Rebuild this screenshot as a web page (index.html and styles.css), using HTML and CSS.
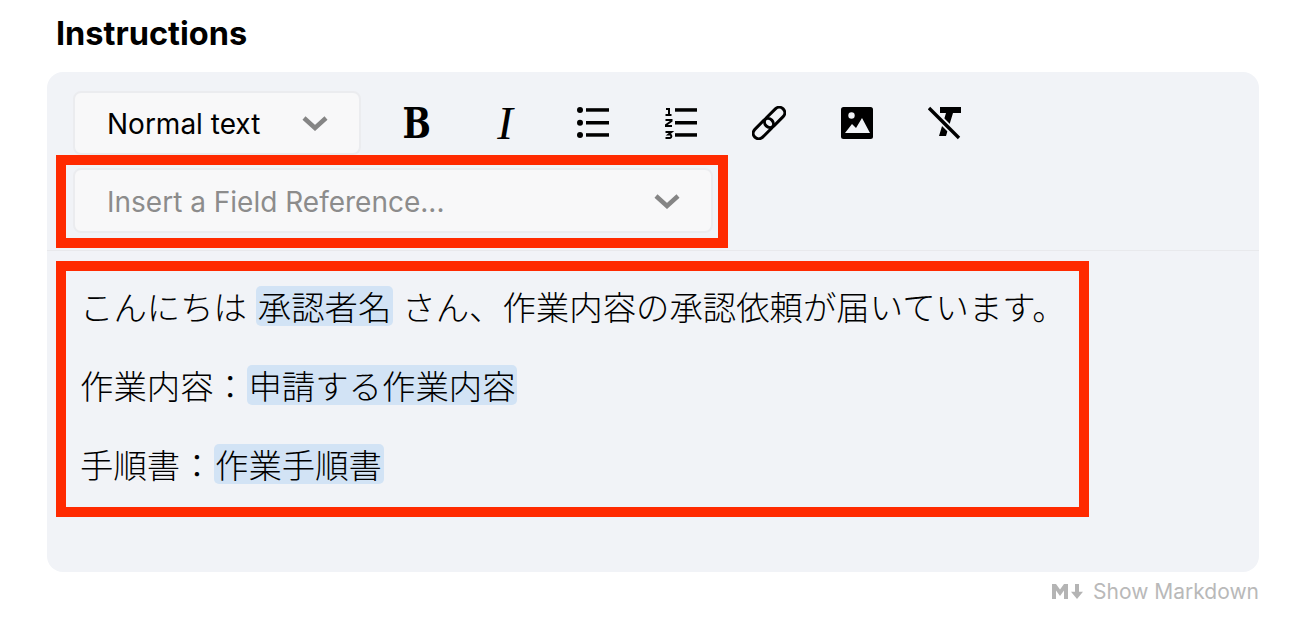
FILE: index.html
```html
<!DOCTYPE html>
<html lang="ja">
<head>
  <meta charset="UTF-8">
  <title>Instructions</title>
  <link rel="stylesheet" href="styles.css">
</head>
<body>
  <div class="field">
    <h2 class="field-title">Instructions</h2>

    <div class="editor">
      <div class="toolbar">
        <div class="toolbar-row">
          <div class="select select-format">
            <span>Normal text</span>
            <svg class="chevron" viewBox="0 0 26 16"><path d="M2 3l11 10L24 3"/></svg>
          </div>
          <button class="tool tool-bold" type="button"><span>B</span></button>
          <button class="tool tool-italic" type="button">I</button>
          <button class="tool" type="button">
            <svg viewBox="0 0 34 34" width="34" height="34">
              <circle cx="4" cy="4" r="3"/><circle cx="4" cy="16.700" r="3"/><circle cx="4" cy="29" r="3"/>
              <rect x="10" y="2.200" width="23" height="3.500"/><rect x="10" y="15" width="23" height="3.500"/><rect x="10" y="27.200" width="23" height="3.500"/>
            </svg>
          </button>
          <button class="tool" type="button">
            <svg viewBox="0 0 34 34" width="34" height="34">
              <path class="line" d="M2 3h3v6M1.500 9h6"/>
              <path class="line" d="M1.500 14h6v1L2 19v1h6"/>
              <path class="line" d="M1.500 26h6l-3 2.500h1.500a1.800 1.800 0 0 1 0 3.500H1.500"/>
              <rect x="11" y="2.200" width="22" height="3.500"/><rect x="11" y="15" width="22" height="3.500"/><rect x="11" y="27.200" width="22" height="3.500"/>
            </svg>
          </button>
          <button class="tool" type="button">
            <svg viewBox="0 0 34 34" width="34" height="34">
              <g class="link" transform="rotate(-45 17 17)">
                <rect x="-3" y="11.500" width="24" height="11" rx="5.500"/>
                <rect x="13" y="11.500" width="24" height="11" rx="5.500"/>
              </g>
            </svg>
          </button>
          <button class="tool" type="button">
            <svg viewBox="0 0 34 34" width="34" height="34">
              <rect x="1" y="1" width="32" height="32" rx="2.500"/>
              <circle class="cut" cx="11.500" cy="9.500" r="3.200"/>
              <path class="cut" d="M5 27l7-9 4 4 6-10 8 15z"/>
            </svg>
          </button>
          <button class="tool" type="button">
            <svg viewBox="0 0 34 34" width="34" height="34">
              <path d="M12 1h21v6h-8l-7 23h-7l7-23h-6z"/>
              <path class="slash-gap" d="M1 2l30 30"/>
              <path class="slash" d="M1 2l30 30"/>
            </svg>
          </button>
        </div>
        <div class="select select-field">
          <span>Insert a Field Reference...</span>
          <svg class="chevron" viewBox="0 0 26 16"><path d="M2 3l11 10L24 3"/></svg>
        </div>
      </div>

      <div class="content">
        <p>こんにちは <span class="chip">承認者名</span> さん、作業内容の承認依頼が届いています。</p>
        <p>作業内容：<span class="chip">申請する作業内容</span></p>
        <p>手順書：<span class="chip">作業手順書</span></p>
      </div>

      <div class="callout callout-field"></div>
      <div class="callout callout-content"></div>
    </div>

    <div class="markdown-toggle">
      <svg viewBox="30 30 165 68" width="33" height="15" preserveAspectRatio="none"><path d="M30 98V30h20l20 25 20-25h20v68H90V59L70 84 50 59v39zm125 0l-30-33h20V30h20v35h20z"/></svg>
      <span>Show Markdown</span>
    </div>
  </div>
</body>
</html>
```

FILE: styles.css
```css
body {
  margin: 0;
  background: #fff;
  font-family: Inter, "Noto Sans CJK JP", sans-serif;
  color: #000;
}
.field {
  width: 1212px;
  margin-left: 47px;
}
.field-title {
  margin: 0;
  padding: 15px 0 0 9px;
  height: 72px;
  box-sizing: border-box;
  font-size: 32.500px;
  line-height: 38px;
  font-weight: 700;
}
.editor {
  position: relative;
  height: 500px;
  background: #f1f3f7;
  border-radius: 16px;
}
.toolbar {
  display: flex;
  flex-direction: column;
  gap: 13px;
  padding: 19px 26px 17px;
  border-bottom: 1px solid #e8e9ec;
}
.toolbar-row {
  display: flex;
  align-items: center;
}
.select {
  display: flex;
  align-items: center;
  justify-content: space-between;
  box-sizing: border-box;
  height: 64px;
  padding: 0 32px;
  background: #f8f8f9;
  border: 2px solid #ebecef;
  border-radius: 8px;
  font-size: 28px;
}
.select span {
  padding-top: 2px;
}
.select-format {
  width: 288px;
  margin-right: 12px;
  padding-right: 31px;
}
.select-field {
  width: 640px;
  height: 65px;
  color: #8c8c8c;
  padding-right: 31px;
}
.chevron {
  width: 26px;
  height: 16px;
  fill: none;
  stroke: #858585;
  stroke-width: 4.500;
}
.tool {
  display: flex;
  align-items: center;
  justify-content: center;
  width: 88px;
  height: 64px;
  padding: 0;
  background: none;
  border: none;
  color: #000;
}
.tool-bold span {
  font-family: "DejaVu Serif", serif;
  font-weight: 700;
  font-size: 42px;
  transform: scaleX(0.800);
}
.tool-italic {
  font-family: "Liberation Serif", serif;
  font-style: italic;
  font-size: 47px;
}
.line {
  fill: none;
  stroke: #000;
  stroke-width: 2;
}
.link rect {
  fill: none;
  stroke: #000;
  stroke-width: 3;
}
.cut {
  fill: #f1f3f7;
}
.slash-gap {
  fill: none;
  stroke: #f1f3f7;
  stroke-width: 7;
}
.slash {
  fill: none;
  stroke: #000;
  stroke-width: 3.400;
}
.content {
  padding: 31px 33px 0;
  font-family: "Noto Sans CJK JP", sans-serif;
  font-size: 33.400px;
  font-weight: 300;
  line-height: 48px;
  word-spacing: 2px;
}
.content p {
  margin: 0 0 31px;
}
.chip {
  display: inline-block;
  height: 40px;
  padding: 0 1.500px;
  line-height: 40px;
  background: #d2e3f5;
  border-radius: 5px;
}
.callout {
  position: absolute;
  box-sizing: border-box;
  border: 10px solid #ff2a00;
}
.callout-field {
  left: 9px;
  top: 83px;
  width: 672px;
  height: 93px;
}
.callout-content {
  left: 9px;
  top: 189px;
  width: 1033px;
  height: 256px;
}
.markdown-toggle {
  display: flex;
  align-items: center;
  justify-content: flex-end;
  gap: 8px;
  height: 38px;
  font-size: 21px;
  color: #b9b9b9;
}
.markdown-toggle svg {
  fill: #b4b4b4;
}
```
